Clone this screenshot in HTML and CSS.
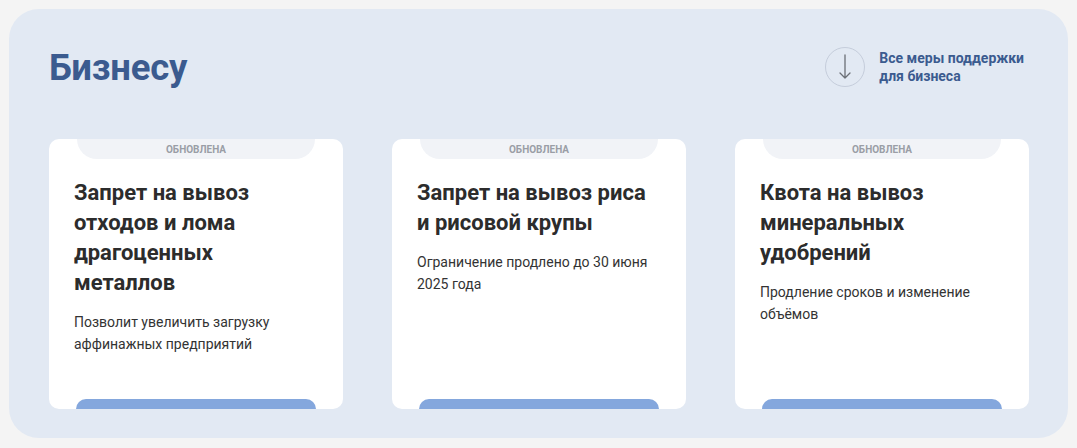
FILE: index.html
```html
<!DOCTYPE html>
<html lang="ru">
<head>
<meta charset="utf-8">
<title>Бизнесу</title>
<link rel="stylesheet" href="styles.css">
</head>
<body>
<section class="panel">
  <header class="panel-head">
    <h1 class="panel-title">Бизнесу</h1>
    <a class="all-link" href="#">
      <span class="all-icon">
        <svg width="14" height="26" viewBox="0 0 14 26" aria-hidden="true">
          <path d="M7 1 V24 M2 19 L7 24 L12 19" fill="none" stroke="#6b6f76" stroke-width="1.3" stroke-linecap="round" stroke-linejoin="round"/>
        </svg>
      </span>
      <span class="all-text">Все меры поддержки<br>для бизнеса</span>
    </a>
  </header>
  <div class="cards">
    <article class="card">
      <div class="badge">ОБНОВЛЕНА</div>
      <h2 class="card-title">Запрет на вывоз отходов и лома драгоценных металлов</h2>
      <p class="card-text">Позволит увеличить загрузку аффинажных предприятий</p>
      <span class="card-btn"></span>
    </article>
    <article class="card">
      <div class="badge">ОБНОВЛЕНА</div>
      <h2 class="card-title">Запрет на вывоз риса и рисовой крупы</h2>
      <p class="card-text">Ограничение продлено до 30 июня 2025 года</p>
      <span class="card-btn"></span>
    </article>
    <article class="card">
      <div class="badge">ОБНОВЛЕНА</div>
      <h2 class="card-title">Квота на вывоз минеральных удобрений</h2>
      <p class="card-text">Продление сроков и изменение объёмов</p>
      <span class="card-btn"></span>
    </article>
  </div>
</section>
</body>
</html>
```
FILE: styles.css
```css
* { box-sizing: border-box; }

html, body {
  margin: 0;
  background: #f4f4f4;
}

body {
  padding: 9px 9px 0 9px;
  font-family: Roboto, "Liberation Sans", Arial, sans-serif;
}

.panel {
  background: #e2e9f3;
  border-radius: 30px;
  height: 429px;
  padding: 28px 39px 0 40px;
}

.panel-head {
  height: 60px;
  display: flex;
  align-items: center;
  justify-content: space-between;
}

.panel-title {
  margin: 0;
  font-size: 36.5px;
  font-weight: 700;
  color: #3b5b8f;
  letter-spacing: -0.2px;
}

.all-link {
  display: flex;
  align-items: center;
  gap: 14px;
  text-decoration: none;
  margin-right: 5px;
}

.all-icon {
  width: 40px;
  height: 40px;
  border: 1px solid #c5cddb;
  border-radius: 50%;
  display: flex;
  align-items: center;
  justify-content: center;
}

.all-text {
  font-size: 14px;
  font-weight: 700;
  line-height: 18px;
  color: #3b5b8f;
}

.cards {
  margin-top: 42px;
  display: flex;
  gap: 49px;
}

.card {
  width: 294px;
  height: 270px;
  flex-shrink: 0;
  background: #ffffff;
  border-radius: 10px;
  padding: 0 25px;
  display: flex;
  flex-direction: column;
  overflow: hidden;
}

.badge {
  margin: 0 3px;
  height: 20px;
  background: #f1f3f7;
  border-radius: 0 0 20px 20px;
  font-size: 10px;
  font-weight: 700;
  line-height: 21px;
  text-align: center;
  color: #9a9ea6;
  flex-shrink: 0;
}

.card-title {
  margin: 19px 0 0 0;
  font-size: 22px;
  font-weight: 700;
  line-height: 30px;
  color: #2c2c2c;
}

.card-text {
  margin: 13px 0 0 0;
  font-size: 14px;
  line-height: 22px;
  color: #333333;
}

.card-btn {
  display: block;
  flex-shrink: 0;
  margin: auto 2px -30px 2px;
  width: 240px;
  height: 40px;
  background: #84a7dd;
  border-radius: 10px;
}
```
